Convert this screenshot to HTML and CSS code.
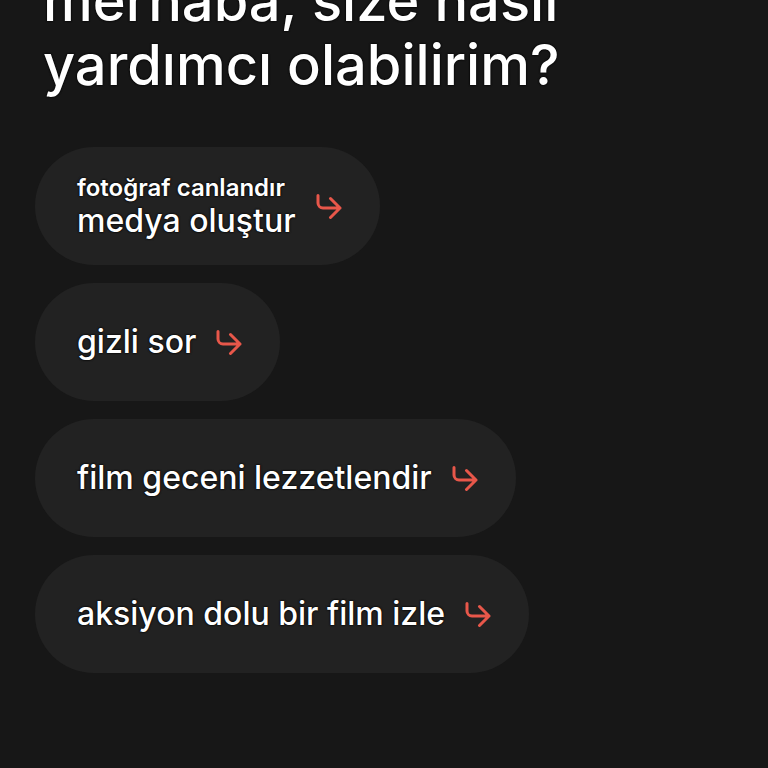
FILE: index.html
```html
<!DOCTYPE html>
<html lang="tr">
<head>
<meta charset="utf-8">
<link rel="stylesheet" href="styles.css">
</head>
<body>
<main class="screen">
  <h1 class="title">merhaba, size nasıl<br>yardımcı olabilirim?</h1>
  <ul class="suggestions">
    <li class="pill">
      <span class="pill-text">
        <span class="pill-sub">fotoğraf canlandır</span>
        <span class="pill-main">medya oluştur</span>
      </span>
      <svg class="arrow" viewBox="0 0 26 25" width="26" height="25"><path d="M2 1.5V9a5 5 0 0 0 5 5h17M14.5 4.5L24 14l-9.5 9.5" fill="none" stroke="currentColor" stroke-width="3" stroke-linecap="round" stroke-linejoin="round"/></svg>
    </li>
    <li class="pill">
      <span class="pill-main">gizli sor</span>
      <svg class="arrow" viewBox="0 0 26 25" width="26" height="25"><path d="M2 1.5V9a5 5 0 0 0 5 5h17M14.5 4.5L24 14l-9.5 9.5" fill="none" stroke="currentColor" stroke-width="3" stroke-linecap="round" stroke-linejoin="round"/></svg>
    </li>
    <li class="pill">
      <span class="pill-main">film geceni lezzetlendir</span>
      <svg class="arrow" viewBox="0 0 26 25" width="26" height="25"><path d="M2 1.5V9a5 5 0 0 0 5 5h17M14.5 4.5L24 14l-9.5 9.5" fill="none" stroke="currentColor" stroke-width="3" stroke-linecap="round" stroke-linejoin="round"/></svg>
    </li>
    <li class="pill">
      <span class="pill-main">aksiyon dolu bir film izle</span>
      <svg class="arrow" viewBox="0 0 26 25" width="26" height="25"><path d="M2 1.5V9a5 5 0 0 0 5 5h17M14.5 4.5L24 14l-9.5 9.5" fill="none" stroke="currentColor" stroke-width="3" stroke-linecap="round" stroke-linejoin="round"/></svg>
    </li>
  </ul>
</main>
</body>
</html>
```
FILE: styles.css
```css
html, body {
  margin: 0;
  padding: 0;
  background: #171717;
  height: 100%;
  overflow: hidden;
}
.screen {
  padding: 0 0 0 35px;
  font-family: Inter, "Noto Sans", sans-serif;
  color: #ffffff;
}
.title {
  margin: -31px 0 0 8px;
  font-size: 56px;
  line-height: 64px;
  font-weight: 500;
  letter-spacing: 0;
  text-shadow: 0 0 2px #000, 0 0 2px #000;
}
.suggestions {
  list-style: none;
  margin: 50px 0 0 0;
  padding: 0;
  display: flex;
  flex-direction: column;
  align-items: flex-start;
  gap: 18px;
}
.pill {
  display: flex;
  align-items: center;
  gap: 20px;
  height: 118px;
  box-sizing: border-box;
  padding: 0 38px 0 42px;
  background: #222222;
  border-radius: 59px;
}
.pill-text {
  display: flex;
  flex-direction: column;
}
.pill-sub {
  font-size: 24px;
  line-height: 29px;
  font-weight: 600;
  letter-spacing: 0;
  text-shadow: 0 0 2px #000, 0 0 2px #000;
}
.pill-main {
  font-size: 32px;
  line-height: 38px;
  font-weight: 500;
  letter-spacing: 0;
  text-shadow: 0 0 2px #000, 0 0 2px #000;
}
.arrow {
  color: #e8574a;
  flex: none;
}
```
